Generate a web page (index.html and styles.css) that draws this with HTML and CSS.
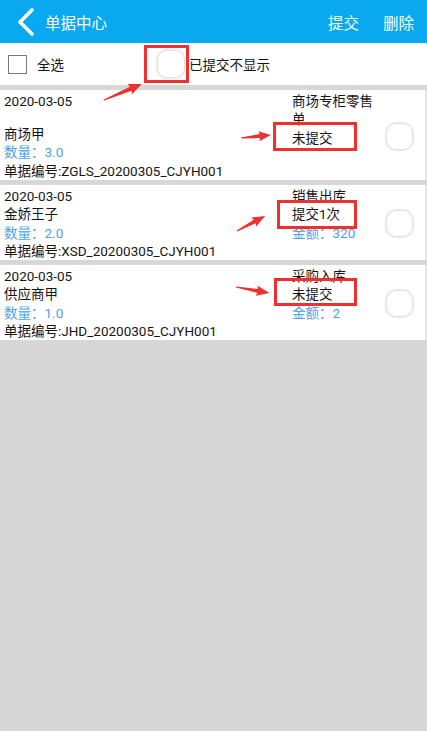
FILE: index.html
```html
<!DOCTYPE html>
<html lang="zh">
<head>
  <meta charset="UTF-8" />
  <title>单据中心</title>
  <link rel="stylesheet" href="styles.css">
</head>
<body>
  <div class="app">
    <header class="topbar">
      <svg class="back" width="20" height="28" viewBox="0 0 20 28">
        <path d="M18 2 L6 14 L18 26" fill="none" stroke="#fff" stroke-width="3.6" stroke-linecap="round" stroke-linejoin="round"/>
      </svg>
      <span class="title">单据中心</span>
      <span class="action">提交</span>
      <span class="action">删除</span>
    </header>

    <div class="filter">
      <span class="box"></span>
      <span class="all">全选</span>
      <span class="round top-round"></span>
      <span class="hide">已提交不显示</span>
    </div>

    <ul class="list">
      <li class="card tall">
        <div class="left">
          <div>2020-03-05</div>
          <div>
            <div>商场甲</div>
            <div class="blue">数量：3.0</div>
            <div>单据编号:ZGLS_20200305_CJYH001</div>
          </div>
        </div>
        <div class="right">
          <div>商场专柜零售单</div>
          <div>未提交</div>
        </div>
        <span class="round"></span>
      </li>
      <li class="card">
        <div class="left">
          <div>2020-03-05</div>
          <div>金娇王子</div>
          <div class="blue">数量：2.0</div>
          <div>单据编号:XSD_20200305_CJYH001</div>
        </div>
        <div class="right">
          <div>销售出库</div>
          <div>提交1次</div>
          <div class="blue">金额：320</div>
        </div>
        <span class="round"></span>
      </li>
      <li class="card">
        <div class="left">
          <div>2020-03-05</div>
          <div>供应商甲</div>
          <div class="blue">数量：1.0</div>
          <div>单据编号:JHD_20200305_CJYH001</div>
        </div>
        <div class="right">
          <div>采购入库</div>
          <div>未提交</div>
          <div class="blue">金额：2</div>
        </div>
        <span class="round"></span>
      </li>
    </ul>

    <!-- annotation marks drawn over the screenshot -->
    <svg class="marks" width="427" height="731" viewBox="0 0 427 731">
      <g fill="none" stroke="#ee3030" stroke-width="3">
        <rect x="145.5" y="46.5" width="42" height="35"/>
        <rect x="274.5" y="123.5" width="81" height="26"/>
        <rect x="278.5" y="201.5" width="77" height="26"/>
        <rect x="275.5" y="279.5" width="80" height="25"/>
      </g>
      <g fill="#ee3030">
        <path transform="translate(104 100) rotate(-22.8)" d="M0 -0.6 L29 -2.2 L28 -5.5 L41 0 L28 5.5 L29 2.2 L0 0.6 Z"/>
        <path transform="translate(241 138) rotate(-5.7)" d="M0 -0.6 L19 -2 L18 -5 L30 0 L18 5 L19 2 L0 0.6 Z"/>
        <path transform="translate(237 231) rotate(-28.2)" d="M0 -0.6 L20 -2 L19 -5 L32 0 L19 5 L20 2 L0 0.6 Z"/>
        <path transform="translate(236 287) rotate(10.3)" d="M0 -0.6 L22 -2 L21 -5 L34 0 L21 5 L22 2 L0 0.6 Z"/>
      </g>
    </svg>
  </div>
</body>
</html>
```

FILE: styles.css
```css
* { box-sizing: border-box; }
body { margin: 0; background: #d7d7d7; font-family: Roboto, "Noto Sans CJK SC", sans-serif; color: #151515; }
.app { position: relative; width: 427px; min-height: 731px; }

.topbar { height: 43px; background: #0aa9ef; color: #fff; display: flex; align-items: center; padding: 0 13px 0 14px; font-size: 15.5px; }
.back { margin-right: 11px; }
.title { flex: 1; }
.action { margin-left: 24px; }

.filter { height: 42px; background: #fff; display: flex; align-items: center; font-size: 13.5px; margin-bottom: 5px; }
.box { width: 19px; height: 19px; border: 1.5px solid #7a7a7a; margin-left: 8px; }
.all { margin-left: 10px; }
.hide { margin-left: 4px; }
.round { width: 28px; height: 28px; border-radius: 10px; background: #fff; border: 1px solid #e2e2e2; box-shadow: 0 0 3px rgba(0, 0, 0, 0.18); flex-shrink: 0; }
.top-round { margin-left: 93px; }

.list { list-style: none; margin: 0; padding: 0; }
.card { background: #fff; display: flex; align-items: center; padding-top: 2px; margin-bottom: 5px; font-size: 13.5px; line-height: 18.3px; border-right: 2px solid #e6e6e6; }
.card.tall { min-height: 90px; }
.left { flex: 1; padding-left: 4px; align-self: stretch; display: flex; flex-direction: column; justify-content: space-between; }
.right { width: 84px; align-self: flex-start; }
.card .round { margin: 0 12px 0 10px; width: 27px; height: 27px; }
.blue { color: #4e9fe8; }

.marks { position: absolute; top: 0; left: 0; pointer-events: none; }
```
